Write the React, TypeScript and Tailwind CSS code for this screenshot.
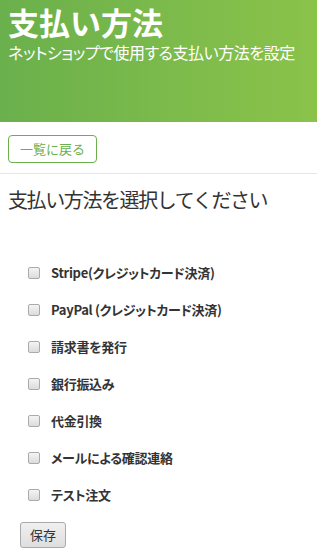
const methods = [
  "Stripe(クレジットカード決済)",
  "PayPal (クレジットカード決済)",
  "請求書を発行",
  "銀行振込み",
  "代金引換",
  "メールによる確認連絡",
  "テスト注文",
];

const font = { fontFamily: '"Noto Sans CJK JP", "Liberation Sans", sans-serif' };

export default function App() {
  return (
    <div className="min-h-[558px] w-[317px] bg-white" style={font}>
      <header className="h-[122px] bg-gradient-to-r from-[#6ab04c] to-[#8bc34a] px-2 pt-[2px] text-white">
        <h1 className="text-[31px] font-bold leading-[40px]">支払い方法</h1>
        <p className="whitespace-nowrap text-[16px] leading-[20px] tracking-[-0.45px] [font-feature-settings:'palt']">
          ネットショップで使用する支払い方法を設定
        </p>
      </header>

      <div className="border-b border-[#e5e5e5] px-2 pt-[13px] pb-[10px]">
        <button
          type="button"
          className="h-[28px] w-[89px] rounded-[4px] border border-[#6ab04c] bg-white text-[13px] text-[#6ab04c]"
        >
          一覧に戻る
        </button>
      </div>

      <h2 className="px-2 pt-[12px] text-[20px] leading-[28px] tracking-[-1.4px] text-[#333]">
        支払い方法を選択してください
      </h2>

      <ul className="mt-[49px] flex flex-col gap-[17px] pl-[28px]">
        {methods.map((m) => (
          <li key={m} className="flex h-[20px] items-center gap-[11px]">
            <span className="h-[12px] w-[12px] rounded-[2px] border border-[#aaa] bg-gradient-to-b from-[#f4f4f4] to-[#dcdcdc]" />
            <span className="text-[13px] font-bold tracking-[-0.3px] text-[#333] [font-feature-settings:'palt']">{m}</span>
          </li>
        ))}
      </ul>

      <div className="pl-[20px] pt-[16px]">
        <button
          type="button"
          className="h-[26px] w-[46px] rounded-[3px] border border-[#aaa] bg-gradient-to-b from-[#f0f0f0] to-[#dedede] text-[13px] text-[#333]"
        >
          保存
        </button>
      </div>
    </div>
  );
}
